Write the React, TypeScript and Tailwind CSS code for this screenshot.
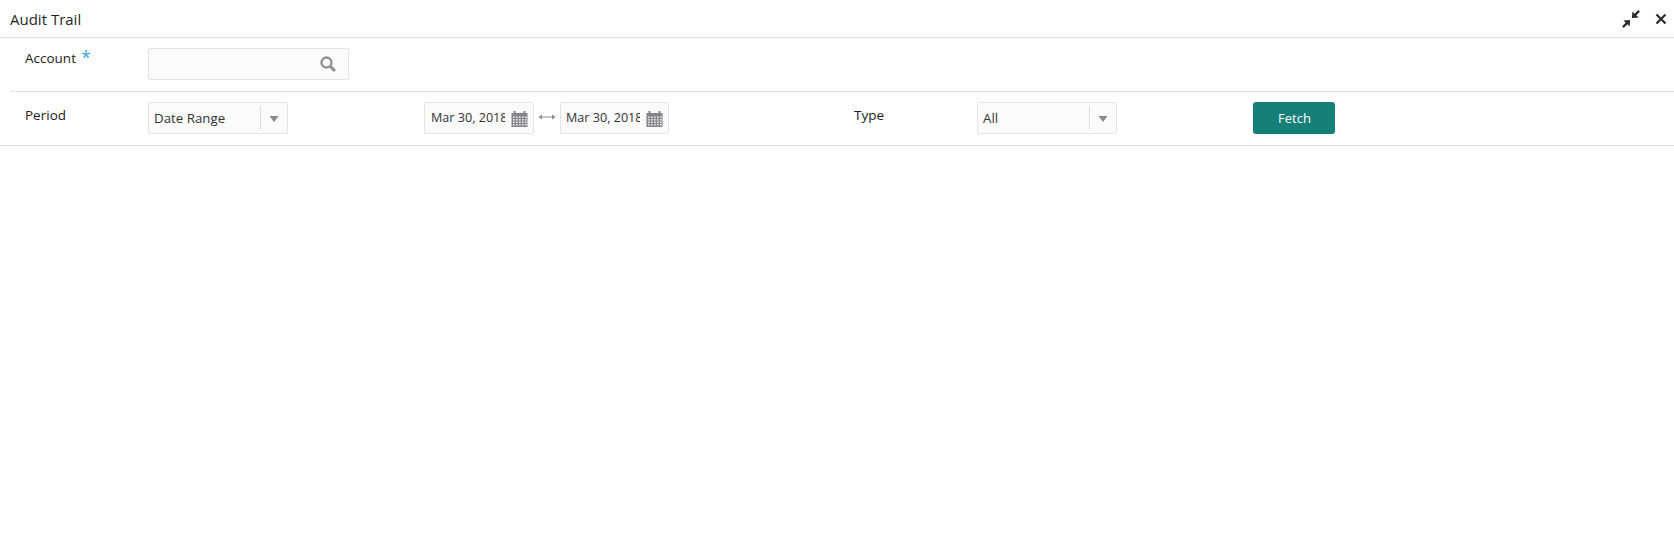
import React from "react";

function Caret() {
  return (
    <span className="flex w-[26px] items-center justify-center pt-[2px]">
      <svg width="10" height="6" viewBox="0 0 10 6">
        <path d="M0.5 0h9L5 6z" fill="#8a8a8a" />
      </svg>
    </span>
  );
}

function Dropdown({ value }: { value: string }) {
  return (
    <div className="flex h-[32px] w-[140px] items-center rounded-[2px] border border-[#e4e4e4] bg-[#fbfbfb] pl-[5px] text-[13.3px] text-[#333]">
      <span className="flex-1 pt-[1px]">{value}</span>
      <span className="h-[24px] w-px bg-[#dcdcdc]" />
      <Caret />
    </div>
  );
}

function CalendarIcon() {
  return (
    <svg width="17" height="17" viewBox="0 0 17 17" className="shrink-0">
      <path d="M0.5 3h2V1h2v2h8V1h2v2h2v14h-16z" fill="#85858a" />
      <g fill="#e6e6e6">
        {[6.5, 9, 11.5, 14].map((y) =>
          [2, 5, 8, 11, 14].map((x) => (
            <rect key={`${x}-${y}`} x={x} y={y} width="1.7" height="1.5" />
          ))
        )}
      </g>
    </svg>
  );
}

function DateInput({ className }: { className: string }) {
  return (
    <div className={`flex h-[32px] items-center rounded-[2px] border border-[#e4e4e4] bg-[#fbfbfb] text-[12.6px] text-[#333] ${className}`}>
      <span className="w-[74px] overflow-hidden whitespace-nowrap pt-[1px]">Mar 30, 2018</span>
      <span className="ml-[6px]">
        <CalendarIcon />
      </span>
    </div>
  );
}

export default function App() {
  return (
    <div className="h-[538px] w-[1674px] bg-white font-['Open_Sans',sans-serif] text-[13.5px] text-[#222]">
      <div className="flex h-[38px] items-center justify-between border-b border-[#dfdfdf] pl-[10px] pr-[7px]">
        <span className="text-[15px] leading-[36px] text-[#1f1f1f]">Audit Trail</span>
        <div className="flex items-center gap-[14px]">
          <svg width="20" height="20" viewBox="0 0 18 18">
            <path d="M17 2.5 13.8 5.7 15.8 7.7 9.8 8.2 10.3 2.2 12.3 4.2 15.5 1z" fill="#2a2a2a" />
            <path d="M1 15.5 4.2 12.3 2.2 10.3 8.2 9.8 7.7 15.8 5.7 13.8 2.5 17z" fill="#2a2a2a" />
          </svg>
          <svg width="12" height="12" viewBox="0 0 12 12">
            <path d="M1.5 1.5l9 9M10.5 1.5l-9 9" stroke="#2a2a2a" strokeWidth="2.2" />
          </svg>
        </div>
      </div>

      <div className="ml-[10px] flex h-[54px] items-start border-b border-[#dfdfdf] pl-[15px] pt-[10px]">
        <div className="flex w-[123px] items-start pt-[1px]">
          <span className="leading-[18px]">Account</span>
          <span className="ml-[5px] text-[18px] leading-[16px] text-[#3fa9dc]">*</span>
        </div>
        <div className="flex h-[32px] w-[201px] items-center justify-end rounded-[2px] border border-[#e4e4e4] bg-[#fbfbfb] pr-[12px]">
          <svg width="16" height="16" viewBox="0 0 16 16">
            <circle cx="6.5" cy="6.5" r="5" fill="none" stroke="#8f8f8f" strokeWidth="2.3" />
            <path d="M10 10l5 5" stroke="#8f8f8f" strokeWidth="3" />
          </svg>
        </div>
      </div>

      <div className="flex h-[54px] items-start border-b border-[#dfdfdf] pl-[25px] pt-[10px]">
        <span className="w-[123px] pt-[4px] leading-[18px]">Period</span>
        <div className="w-[276px]">
          <Dropdown value="Date Range" />
        </div>
        <DateInput className="w-[110px] pl-[6px]" />
        <span className="flex w-[26px] justify-center pt-[7px]">
          <svg width="18" height="16" viewBox="0 0 18 16" className="-ml-[1px]">
            <path d="M2 8h14" stroke="#8c8c8c" strokeWidth="1" />
            <path d="M0.5 8 4 5.5v5zM17.5 8 14 5.5v5z" fill="#8c8c8c" />
          </svg>
        </span>
        <DateInput className="w-[109px] pl-[5px]" />
        <span className="ml-[185px] w-[123px] pt-[4px] leading-[18px]">Type</span>
        <Dropdown value="All" />
        <button className="ml-[136px] h-[32px] w-[82px] rounded-[3px] bg-[#167f78] pl-[1px] pt-[1px] text-[13px] text-white">
          Fetch
        </button>
      </div>
    </div>
  );
}
